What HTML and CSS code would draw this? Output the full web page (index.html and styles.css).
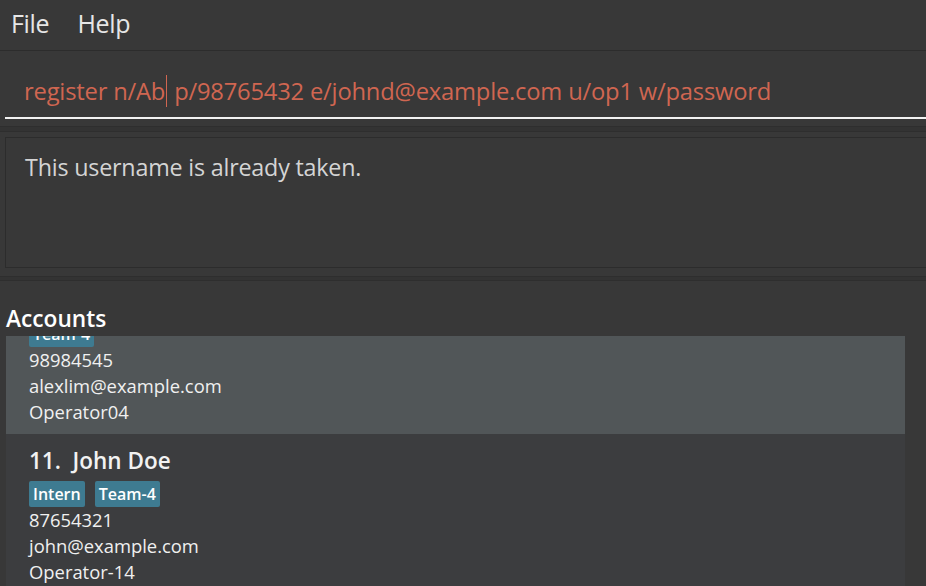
FILE: index.html
```html
<!DOCTYPE html>
<html>
<head>
<meta charset="utf-8">
<link rel="stylesheet" href="styles.css">
</head>
<body>
<div class="app">
  <div class="menubar">
    <span class="menu-item">File</span>
    <span class="menu-item">Help</span>
  </div>
  <div class="command-pane">
    <div class="command-box">
      <span class="cmd-text">register n/Ab</span><span class="caret"></span><span class="cmd-text"> p/98765432 e/johnd@example.com u/op1 w/password</span>
    </div>
  </div>
  <div class="sep sep-top"></div>
  <div class="result-pane">
    <div class="result-box">This username is already taken.</div>
  </div>
  <div class="sep sep-bottom"></div>
  <div class="list-pane">
    <div class="list-title">Accounts</div>
    <div class="list-view">
      <div class="list-scroll">
        <div class="card card-selected">
          <div class="card-name">10.&nbsp;&nbsp;Alex Lim</div>
          <div class="tags"><span class="tag">Team-4</span></div>
          <div class="card-line">98984545</div>
          <div class="card-line">alexlim@example.com</div>
          <div class="card-line">Operator04</div>
        </div>
        <div class="card card-even">
          <div class="card-name">11.&nbsp;&nbsp;John Doe</div>
          <div class="tags"><span class="tag">Intern</span><span class="tag">Team-4</span></div>
          <div class="card-line">87654321</div>
          <div class="card-line">john@example.com</div>
          <div class="card-line">Operator-14</div>
        </div>
      </div>
    </div>
  </div>
</div>
</body>
</html>
```
FILE: styles.css
```css
html, body {
  margin: 0;
  padding: 0;
  background: #383838;
  overflow: hidden;
}
body {
  font-family: "Open Sans", "Noto Sans", sans-serif;
  width: 926px;
  height: 586px;
}
.app {
  display: flex;
  flex-direction: column;
  height: 586px;
}
.menubar {
  height: 51px;
  display: flex;
  align-items: center;
  gap: 28px;
  padding-left: 11px;
  padding-bottom: 5px;
  box-sizing: border-box;
  border-bottom: 1px solid #2c2c2c;
}
.menu-item {
  color: #e6e6e6;
  font-size: 25px;
  letter-spacing: -0.3px;
}
.command-pane {
  height: 75px;
  padding-left: 5px;
  display: flex;
  flex-direction: column;
}
.command-box {
  height: 68px;
  border-bottom: 2px solid #f2f2f2;
  display: flex;
  align-items: center;
  padding-left: 19px;
  padding-top: 14px;
  box-sizing: border-box;
  white-space: pre;
}
.cmd-text {
  color: #d06651;
  font-size: 23.75px;
  font-weight: 400;
  letter-spacing: -0.2px;
}
.caret {
  display: inline-block;
  width: 1px;
  height: 32px;
  background: #d06651;
  margin: 0 1px;
}
.sep {
  height: 4px;
  border-top: 1px solid #2e2e2e;
  border-bottom: 1px solid #2e2e2e;
}
.sep-top {
  background: #333;
}
.result-pane {
  padding: 5px 0 8px 5px;
}
.result-box {
  height: 131px;
  border: 1px solid #2c2c2c;
  border-right: none;
  box-sizing: border-box;
  color: #d4d4d4;
  font-size: 23.3px;
  font-weight: 400;
  letter-spacing: -0.2px;
  padding: 13px 0 0 19px;
}
.sep-bottom {
  height: 3px;
  background: #333;
}
.list-pane {
  flex: 1;
  display: flex;
  flex-direction: column;
  min-height: 0;
}
.list-title {
  color: #ffffff;
  font-weight: 600;
  font-size: 22.7px;
  padding: 22px 0 0 6px;
  height: 33px;
  line-height: 32px;
}
.list-view {
  flex: 1;
  overflow: hidden;
  margin-left: 6px;
  width: 899px;
}
.list-scroll {
  margin-top: -62px;
}
.card {
  height: 160px;
  padding: 12px 0 0 23px;
  box-sizing: border-box;
}
.card-selected {
  background: #515658;
}
.card-even {
  background: #3c3d3f;
}
.card-name {
  color: #f2f2f2;
  font-size: 22.5px;
  font-weight: 600;
  height: 30px;
  line-height: 30px;
}
.tags {
  display: flex;
  gap: 10px;
  margin-top: 5px;
  height: 26px;
}
.tag {
  background: #3e7b91;
  color: #ffffff;
  font-weight: 600;
  font-size: 16px;
  line-height: 26px;
  padding: 0 4px;
  border-radius: 2px;
}
.card-line {
  color: #f0f0f0;
  font-size: 18.4px;
  height: 26px;
  line-height: 26px;
}
```
